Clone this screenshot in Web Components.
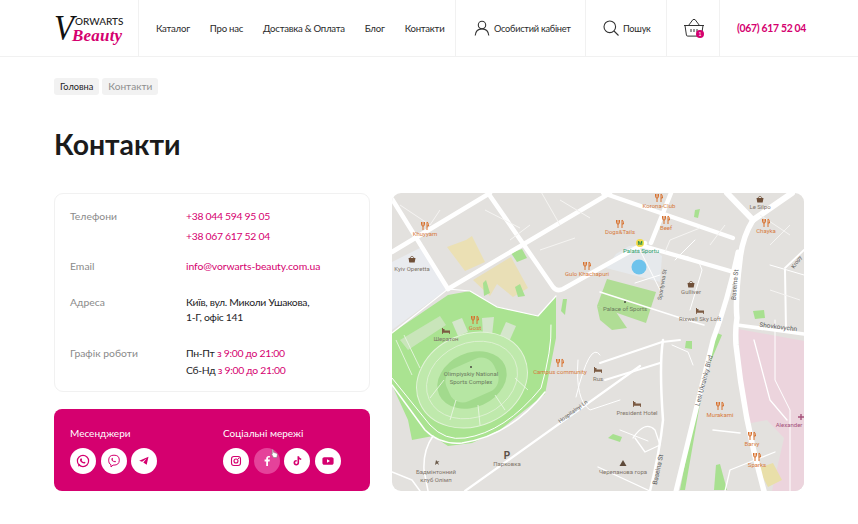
<!DOCTYPE html>
<html lang="uk"><head><meta charset="utf-8"><title>Контакти</title>
<style>
html,body{margin:0;background:#fff;font-family:Lato,"Noto Sans",sans-serif;color:#1d1d1f}
body{width:858px;height:524px;overflow:hidden}
</style></head><body>
<site-header>
  <a-cell w="139" pad="54" slot-type="logo"><brand-logo></brand-logo></a-cell>
  <a-cell w="317" pad="17"><top-nav><span>Каталог</span><span>Про нас</span><span>Доставка &amp; Оплата</span><span>Блог</span><span>Контакти</span></top-nav></a-cell>
  <a-cell w="130" pad="18"><tool-link icon="user">Особистий кабінет</tool-link></a-cell>
  <a-cell w="81" pad="17"><tool-link icon="search">Пошук</tool-link></a-cell>
  <a-cell w="53" pad="16"><basket-icon></basket-icon></a-cell>
  <a-cell w="138" pad="17" last><phone-link>(067) 617 52 04</phone-link></a-cell>
</site-header>
<page-main>
  <bread-crumbs><crumb-chip>Головна</crumb-chip><crumb-chip muted>Контакти</crumb-chip></bread-crumbs>
  <page-title>Контакти</page-title>
  <contact-layout>
    <contact-card>
      <contact-row label="Телефони" lh="20" after="10"><pink-text>+38 044 594 95 05</pink-text><br><pink-text>+38 067 617 52 04</pink-text></contact-row>
      <contact-row label="Email" lh="20" after="19"><pink-text>info@vorwarts-beauty.com.ua</pink-text></contact-row>
      <contact-row label="Адреса" lh="15" after="20">Київ, вул. Миколи Ушакова,<br>1-Г, офіс 141</contact-row>
      <contact-row label="Графік роботи" lh="17" after="0">Пн-Пт <pink-text>з 9:00 до 21:00</pink-text><br>Сб-Нд <pink-text>з 9:00 до 21:00</pink-text></contact-row>
    </contact-card>
    <social-panel>
      <social-group title="Месенджери"><round-btn icon="whatsapp"></round-btn><round-btn icon="viber"></round-btn><round-btn icon="telegram"></round-btn></social-group>
      <social-group title="Соціальні мережі"><round-btn icon="instagram"></round-btn><round-btn icon="facebook" hover></round-btn><round-btn icon="tiktok"></round-btn><round-btn icon="youtube"></round-btn></social-group>
    </social-panel>
    <map-view></map-view>
  </contact-layout>
</page-main>
<script>
const PINK='#d5006f';
function def(name,html,extra){
  customElements.define(name,class extends HTMLElement{
    constructor(){super();const s=this.attachShadow({mode:'open'});s.innerHTML=typeof html==='function'?html(this):html;}
    connectedCallback(){
      const r=this.shadowRoot;
      if(extra)extra(this,r);
    }
  });
}
def('site-header',`<style>:host{display:flex;height:56px;border-bottom:1px solid #f1f1f1;background:#fff;box-sizing:content-box}</style><slot></slot>`);
def('a-cell',`<style>:host{display:flex;align-items:center;box-sizing:border-box;height:56px;border-right:1px solid #f1f1f1;flex:none}:host([last]){border-right:0}</style><slot></slot>`,(e)=>{
  e.style.width=e.getAttribute('w')+'px';
  e.style.paddingLeft=e.getAttribute('pad')+'px';
});
def('brand-logo',`<style>:host{display:block;position:relative;width:72px;height:34px;line-height:1}
.v{position:absolute;left:0;top:-4px;font:italic 400 36px "Liberation Serif",serif;color:#111;transform:scaleX(.9);transform-origin:0 0}
.o{position:absolute;left:21px;top:4px;font:500 10px Lato,sans-serif;color:#222}
.b{position:absolute;left:18px;top:15px;font:italic 700 17px "Liberation Serif",serif;color:${PINK};letter-spacing:.2px}
</style><span class="v">V</span><span class="o">ORWARTS</span><span class="b">Beauty</span>`);
def('top-nav',`<style>:host{display:flex;gap:20px;font-size:9.6px;letter-spacing:-.25px;font-weight:400;color:#2a2a2a;white-space:nowrap}</style><slot></slot>`);
const icons={
 user:`<svg width="16" height="16" viewBox="0 0 16 16" fill="none" stroke="#333" stroke-width="1.1"><circle cx="8" cy="5" r="3.7"/><path d="M1.2 15.5c.4-3.900 3-6.600 6.800-6.600s6.400 2.700 6.800 6.600"/></svg>`,
 search:`<svg width="16" height="16" viewBox="0 0 16 16" fill="none" stroke="#333" stroke-width="1.1"><circle cx="6.800" cy="6.800" r="5.800"/><path d="M11 11l4.500 4.500"/></svg>`
};
def('tool-link',`<style>:host{display:flex;align-items:center;gap:4px;font-size:9.2px;letter-spacing:-.25px;color:#2a2a2a;white-space:nowrap}svg{display:block}</style><span id="i"></span><slot></slot>`,(e,r)=>{r.getElementById('i').innerHTML=icons[e.getAttribute('icon')];});
def('basket-icon',`<style>:host{display:block;position:relative;width:22px;height:20px;top:0}
svg{display:block}b{position:absolute;left:13px;top:12px;width:8px;height:8px;border-radius:50%;background:${PINK};color:#fff;font:500 5px/8px Lato,sans-serif;text-align:center}</style>
<svg width="22" height="20" viewBox="0 0 22 20" fill="none" stroke="#333" stroke-width="1"><path d="M1 7.500h20M2 7.500l1.400 9.500a1.300 1.300 0 0 0 1.300 1.100h12.600a1.300 1.300 0 0 0 1.300-1.100L20 7.500M5.500 7.500L10 1.500h2l4.500 6M8 11v3M11 11v3M14 11v3"/></svg><b>1</b>`);
def('phone-link',`<style>:host{color:${PINK};font-size:10.4px;letter-spacing:-.3px;font-weight:700;white-space:nowrap}</style><slot></slot>`);
def('page-main',`<style>:host{display:block;padding:21px 54px 0}</style><slot></slot>`);
def('bread-crumbs',`<style>:host{display:flex;gap:3px}</style><slot></slot>`);
def('crumb-chip',`<style>:host{display:block;height:17px;line-height:17px;padding:0 6px;background:#f2f2f2;border-radius:3px;font-size:9.2px;color:#1d1d1f}:host([muted]){color:#8f8f8f;font-size:10.1px}</style><slot></slot>`);
def('page-title',`<style>:host{display:block;margin-top:32px;height:66px;font-size:28.4px;line-height:34px;font-weight:700;color:#1b1b1b}</style><slot></slot>`);
def('contact-layout',`<style>:host{display:grid;grid-template-columns:316px 412px;grid-template-rows:199px 82px;column-gap:22px;row-gap:17px}::slotted(map-view){grid-column:2;grid-row:1/3}</style><slot></slot>`);
def('contact-card',`<style>:host{display:block;box-sizing:border-box;border:1px solid #f1f1f1;border-radius:9px;padding:12px 15px 0;font-size:10.4px}</style><slot></slot>`);
def('contact-row',`<style>:host{display:grid;grid-template-columns:116px 1fr}.l{color:#8a8a8a}#v{letter-spacing:-.3px}</style><div class="l" id="l"></div><div id="v"><slot></slot></div>`,(e,r)=>{
  r.getElementById('l').textContent=e.getAttribute('label');
  const lh=e.getAttribute('lh');
  e.style.lineHeight=lh+'px';
  e.style.marginBottom=e.getAttribute('after')+'px';
  if(e.getAttribute('label')==='Email')r.getElementById('v').style.letterSpacing='-.08px';
});
def('pink-text',`<style>:host{color:${PINK}}</style><slot></slot>`);
def('social-panel',`<style>:host{display:grid;grid-template-columns:153px 1fr;box-sizing:border-box;background:${PINK};border-radius:8px;padding:16px;color:#fff}</style><slot></slot>`);
def('social-group',`<style>:host{display:block}.t{font-size:10px;line-height:16px;color:#fff;margin-bottom:7px;white-space:nowrap}.r{display:flex;gap:4.6px}</style><div class="t" id="t"></div><div class="r"><slot></slot></div>`,(e,r)=>{r.getElementById('t').textContent=e.getAttribute('title');});
const P=PINK;
const soc={
 whatsapp:`<circle cx="8" cy="8" r="5.600" fill="none" stroke="${P}" stroke-width="1.200"/><path d="M3 13.400l.9-3 2 2z" fill="${P}"/><path d="M5.900 5.300c.8-.5 1 1 1.100 1.400 0 .4-.5.500-.3.900.4.700 1 1.200 1.700 1.500.4.100.5-.5.900-.4.500.200 1.600.6 1 1.300-1 1.100-3.200.3-4.300-.9-1-1-1.600-2.600-.1-3.800z" fill="${P}"/>`,
 viber:`<path d="M8 2.200c3.400 0 5.300 1.400 5.300 5 0 3.500-2.200 4.900-5.300 4.900H7L5 14v-2.300C3.400 11 2.700 9.600 2.700 7.200c0-3.600 1.900-5 5.300-5z" fill="none" stroke="${P}" stroke-width="1"/><path d="M6 4.900c.6-.3.9.8 1 1.100.1.400-.5.500-.3.900.3.600.8 1 1.400 1.300.4.100.5-.5.900-.4.400.200 1.300.5.800 1.100-.8.900-2.500.2-3.400-.8C5.500 7.200 4.900 5.800 6 4.900z" fill="${P}"/>`,
 telegram:`<path d="M12.500 3.700L3.200 7.800l2.900 1 4.500-3.200-3.300 3.900 3.400 2.300z" fill="${P}"/>`,
 instagram:`<rect x="3.500" y="3.500" width="9" height="9" rx="2.400" fill="none" stroke="${P}" stroke-width="1.100"/><circle cx="8" cy="8" r="2" fill="none" stroke="${P}" stroke-width="1.100"/><circle cx="10.600" cy="5.400" r=".6" fill="${P}"/>`,
 facebook:`<path d="M9 13V8.400h1.600l.3-1.800H9V5.500c0-.5.200-.9.900-.9h1V3c-.3-.1-.8-.1-1.200-.1C8.200 2.900 7.200 3.800 7.200 5.300v1.300H5.600v1.800h1.600V13z" fill="#fff"/>`,
 tiktok:`<path d="M8.500 3.200h1.600c.1 1.200.9 2 2.100 2.100v1.600c-.8 0-1.500-.2-2.100-.7v3.500c0 1.700-1.300 2.800-2.800 2.800-1.600 0-2.800-1.300-2.800-2.800 0-1.700 1.400-3 3.200-2.700v1.700c-.8-.3-1.500.2-1.500 1 0 .7.500 1.200 1.100 1.200.7 0 1.200-.5 1.200-1.200z" fill="${P}"/>`,
 youtube:`<path d="M4.300 4.300h7.400c1.100 0 1.900.8 1.900 1.800v3.800c0 1-.8 1.800-1.900 1.800H4.300c-1.100 0-1.900-.8-1.900-1.800V6.100c0-1 .8-1.800 1.900-1.800z" fill="${P}"/><path d="M7 6.200v3.600l3-1.800z" fill="#fff"/>`
};
def('round-btn',`<style>:host{display:block;position:relative;width:26px;height:26px;border-radius:50%;background:#fff}
:host([hover]){background:#e5429a}
svg.i{position:absolute;left:5px;top:5px}svg.c{position:absolute;left:17px;top:1px}</style><svg class="i" width="16" height="16" viewBox="0 0 16 16" id="s"></svg>`,(e,r)=>{
  r.getElementById('s').innerHTML=soc[e.getAttribute('icon')];
  if(e.hasAttribute('hover')&&!r.querySelector('.c'))r.innerHTML+=`<svg class="c" width="7" height="9" viewBox="0 0 7 9"><path d="M1.500 .5c.6 0 .8.4.8 1l.1 1.800 3 1c.8.300 1.100 1 .9 1.800l-.5 2.400H2.500L.3 4.800l1 .3V1.500c0-.6-.2-1 .2-1z" fill="#fff" stroke="#777" stroke-width=".5"/></svg>`;
});

const lbl=(x,y,t,c='#d77a3c',extra='')=>`<text x="${x}" y="${y}" text-anchor="middle" fill="${c}" ${extra}>${t}</text>`;
const fork=(x,y)=>`<g transform="translate(${x-3.500} ${y-4})" fill="none" stroke="#d8702c" stroke-width="1"><path d="M1.500 0v8M0 0v2.800c0 .8.700 1.200 1.500 1.200S3 3.600 3 2.800V0M5.500 8V0c1.200.6 1.500 2.200 1.500 4H5.500"/></g>`;
const bed=(x,y)=>`<g transform="translate(${x-4} ${y-3})"><path d="M0 0v6h.8V4.800h6.400V6H8V2.600H2.500V1H1V0z" fill="#7b5a42"/></g>`;
const bag=(x,y)=>`<g transform="translate(${x-3.500} ${y-3.500})"><path d="M0 2.500h7L6.200 7H.8z" fill="#6f4f38"/><path d="M1.800 2.500C1.800.4 5.200.4 5.200 2.500" fill="none" stroke="#6f4f38" stroke-width=".8"/></g>`;
const dot=(x,y)=>`<circle cx="${x}" cy="${y}" r="1" fill="#4a4a42"/>`;
const road=(d,w=4)=>`<path d="${d}" stroke-width="${w}"/>`;
const mapInner=`
<rect x="392" y="193" width="412" height="298" fill="#e3e1de"/>
<path d="M392 262L424 246L446 290L392 330z" fill="#e9ebef"/>
<path d="M738 329L804 341V491H772L784 438L767 420L746 424z" fill="#ecd4dd"/>
<path d="M447 247L466 240L472 236L485 262L465 271z" fill="#ebe0b4"/>
<path d="M473 280L511 257L528 288L513 297L497 284L490 296z" fill="#e9dfb6"/>
<path d="M758 468L773 463L782 480L768 487z" fill="#e9dfa9"/>
<path d="M392 333L448 295L470 291L497 307L538 316L556 296L556 338L545 394L500 430L472 443L448 446L433 436L412 440L408 420L392 385z" fill="#aae391"/>
<path d="M607 279L656 292L646 323L597 306z" fill="#b0dd95"/>
<path d="M597 306L616 312L627 328L612 330L600 320z" fill="#b0dd95"/>
<g fill="#a8e090"><path d="M511 253L522 249L527 258L517 262z"/><path d="M483 283L486 280L490 293L484 296z"/><path d="M515 287L520 284L525 296L518 297z"/><path d="M695 210L700 209L698 218L694 217z"/><path d="M753 311L764 310L765 318L755 319z"/><path d="M613 434L622 437L620 442L608 438z"/><path d="M686 341L692 341L692 349L685 348z"/><path d="M716 465L720 464L727 490L714 490z"/><path d="M717 333L722 335L705 375L685 490H680L699 390z"/><path d="M563 299L567 299L565 315L561 311z"/></g>
<path d="M616 254L629 246L650 246L662 256L660 282L606 268z" fill="#e6e9ec"/>
<circle cx="639" cy="267" r="7.500" fill="#6ec3ec"/>
<g fill="#d5e6cc"><path d="M452 322L462 318L468 332L458 336z"/><path d="M482 318L494 317L492 336L483 335z"/><path d="M506 322L516 326L508 344L498 340z"/><path d="M400 340L440 316L446 325L408 350z" opacity=".7"/></g>
<g transform="rotate(-24 472 380)">
 <ellipse cx="472" cy="380" rx="57" ry="46" fill="#bfe9ac"/>
 <ellipse cx="472" cy="380" rx="57" ry="46" fill="none" stroke="#e2f3d8" stroke-width="1"/>
 <ellipse cx="472" cy="380" rx="47" ry="37" fill="none" stroke="#dff2d4" stroke-width=".8"/>
 <ellipse cx="472" cy="380" rx="36" ry="27" fill="#a2da8d"/>
 <rect x="446" y="362" width="52" height="36" rx="14" fill="#b6e6a3"/>
</g>
<g fill="none" stroke="#fff" stroke-linejoin="round" stroke-linecap="round">
${road('M392 199L448 289',4.500)}${road('M392 252L490 193',4.500)}${road('M488 193L553 287Q557 292 563 289L645 243',4.500)}
${road('M448 289L610 193',4.500)}${road('M603 193L733 238',4.200)}${road('M640 245L737 273',4.200)}${road('M671 193L651 243',4.500)}
${road('M727 193L753 220',6)}${road('M792 193L753 220',6)}
${road('M753 220Q742 238 740 260Q735 300 737 318Q735 330 736 345Q744 420 764 491',5.500)}
${road('M738 252Q728 300 713 340L676 491',5)}
${road('M737 325L804 334',3.500)}
${road('M448 289L392 333',1.200)}${road('M448 289L470 291L497 307L538 316L556 296',1.200)}
${road('M392 385L425 430Q440 445 462 443Q510 436 545 392',1.500)}
${road('M392 378L430 425Q445 441 465 438Q505 432 541 388Q552 350 551 325',1)}
${road('M433 436Q423 450 424 470L428 491',1.500)}
${road('M392 472L412 480L420 491',1.500)}
${road('M465 491L640 366',2.200)}
${road('M600 363L662 342L680 340',2)}
${road('M663 340Q659 365 663 420Q660 450 650 491',2.500)}
${road('M600 292L690 321L704 325',1.500)}
${road('M635 283L660 275',1)}
${road('M598 467L650 491',1.300)}${road('M605 380L660 363',2)}
${road('M620 430L648 441',1)}${road('M633 438Q645 420 655 430L660 445L645 452L635 438',1.300)}
${road('M785 270L786 330',2)}${road('M804 250L785 268',1.800)}${road('M770 265L804 275',1)}
${road('M775 320L775 380L790 410L790 491',1)}${road('M754 340L770 400L787 420',1.300)}
${road('M713 430L740 433',1.500)}${road('M725 491L730 470L775 452',1.300)}
${road('M672 345L688 352L693 365',1)}
${road('M576 397Q590 340 600 355',1)}${road('M578 360Q575 400 590 410L620 400',1)}
${road('M680 255Q700 258 702 270L690 310',1)}
${road('M675 260L695 240',1)}
${road('M638 246L660 290',1)}
</g>
<g fill="none" stroke="#f5f4f2" stroke-width="1">
<path d="M400 205L430 225L440 210M485 210L520 228M510 240L530 225M540 190L560 225M540 250L575 238M560 200L590 218M700 228L670 240L665 252M710 245L725 225M790 225L770 245M760 215L790 235M770 290L800 300"/>
</g>
<g fill="none" stroke="#eef8e8" stroke-width=".8">
<path d="M396 340L412 375M404 335L420 368M430 398L444 380M450 420L456 400M480 425L478 405M505 410L495 395M528 390L515 378"/>
</g>
<g font-family="Roboto,'Noto Sans',sans-serif" font-size="6">
${fork(425,226)}${lbl(425,236,'Khuyyam')}
${fork(659,198)}${lbl(659,208,'Korona-Club')}
${fork(620,224)}${lbl(620,234,'Dogs&amp;Tails')}
${fork(666,220)}${lbl(666,230,'Beef')}
${fork(766,223)}${lbl(766,233,'Chayka')}
${fork(587,266)}${lbl(587,276,'Gulo Khachapuri')}
${fork(475,320)}${lbl(475,330,'Gost')}
${fork(560,363)}${lbl(560,374,'Campus community')}
${fork(720,406)}${lbl(720,417,'Murakami')}
${fork(752,436)}${lbl(752,446,'Barvy')}
${fork(757,457)}${lbl(757,467,'Sparks')}
${bag(760,199)}${lbl(760,209,'Le Silpo','#7f7469')}
${bag(691,284)}${lbl(691,294,'Gulliver','#7f7469')}
${bed(700,311)}${lbl(700,321,'Rixwell Sky Loft','#7f7469')}
${bed(446,331)}${lbl(446,341,'Шератон','#7f7469')}
${bed(637,404)}${lbl(637,415,'President Hotel','#7f7469')}
${bed(598,370)}${lbl(598,381,'Rus','#7f7469')}
${bag(412,259)}${lbl(412,271,'Kyiv Operetta','#7f7469')}
<circle cx="640" cy="243" r="4" fill="#f2dc4a"/><text x="640" y="245.200" text-anchor="middle" font-size="5.500" font-weight="700" fill="#1f8a4c">M</text>
${lbl(641,253,'Palats Sportu','#2a9d6a')}
${dot(625,302)}${lbl(625,311,'Palace of Sports','#6b7a5e')}
${dot(471,367)}${lbl(471,376,'Olimpiyskiy National','#6b7a5e')}${lbl(471,384,'Sports Complex','#6b7a5e')}
<text x="507" y="459" text-anchor="middle" font-size="10" font-weight="700" fill="#5c5148">P</text>${lbl(507,466,'Парковка','#7f7469')}
<path d="M436 460l1.500 1.500 2-.5-1.500 1.500 1 2.500-2-1.500-2 1.500.5-2.500z" fill="#6b5a4a"/>
${lbl(436,474,'Бадмінтонний','#7f7469')}${lbl(436,482,'клуб Олімп','#7f7469')}
<path d="M623 460l3.500 6h-7z" fill="#5e4a3a"/>${lbl(623,474,'Черепанова гора','#7f7469')}
<path d="M801 414v6M798 417h6" stroke="#a5527a" stroke-width="1.400" fill="none"/>${lbl(789,427,'Alexander','#a5527a')}
<g fill="#5b5b5b">
<text transform="translate(737 285) rotate(-85)" text-anchor="middle" font-size="6.500">Baseina St</text>
<text transform="translate(660 470) rotate(-78)" text-anchor="middle" font-size="6.500">Baseina St</text>
<text transform="translate(706 381) rotate(-75)" text-anchor="middle" font-size="6.500">Lesi Ukrainky Blvd</text>
<text transform="translate(664 285) rotate(-80)" text-anchor="middle" font-size="5.500">Sportyvna St</text>
<text transform="translate(778 329) rotate(7)" text-anchor="middle" font-size="6.500">Shovkovychn</text>
<text transform="translate(798 263) rotate(-55)" text-anchor="middle" font-size="5.500">Kropy</text>
<text transform="translate(574 413) rotate(-36)" text-anchor="middle" font-size="5.500">Hospitalnyi Ln</text>
</g></g>`;
def('map-view',`<style>:host{display:block;border-radius:9px;overflow:hidden;width:412px;height:298px}svg{display:block}</style><svg width="412" height="298" viewBox="392 193 412 298">${mapInner}</svg>`);
</script>
</body></html>
